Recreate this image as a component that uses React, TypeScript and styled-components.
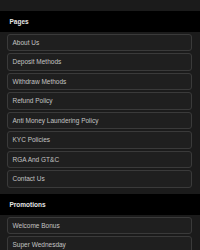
import React from 'react';
import styled, { createGlobalStyle } from 'styled-components';

const GlobalStyle = createGlobalStyle`
  html, body {
    margin: 0;
    padding: 0;
    background: #1b1b1b;
  }
  body {
    font-family: "Liberation Sans", Arial, sans-serif;
  }
`;

const Page = styled.div`
  padding-top: 11px;
  display: flex;
  flex-direction: column;
  gap: 6.5px;
`;

const Section = styled.section`
  display: flex;
  flex-direction: column;
`;

const Header = styled.div`
  background: #000;
  height: 21px;
  display: flex;
  align-items: center;
  padding-left: 9.5px;
  color: #e6e6e6;
  font-size: 6.5px;
  font-weight: bold;
`;

const List = styled.div`
  display: flex;
  flex-direction: column;
  gap: 2px;
  padding: 1.5px 8px 0 7px;
`;

const Item = styled.a`
  box-sizing: border-box;
  height: 17.5px;
  display: flex;
  align-items: center;
  padding-left: 4.5px;
  border: 1px solid #3a3a3a;
  border-radius: 3px;
  background: #1f1f1f;
  color: #c4c4c4;
  font-size: 6.5px;
  text-decoration: none;
  cursor: pointer;
`;

const pages = [
  'About Us',
  'Deposit Methods',
  'Withdraw Methods',
  'Refund Policy',
  'Anti Money Laundering Policy',
  'KYC Policies',
  'RGA And GT&C',
  'Contact Us',
];

const promotions = ['Welcome Bonus', 'Super Wednesday'];

export default function App() {
  return (
    <>
      <GlobalStyle />
      <Page>
        <Section>
          <Header>Pages</Header>
          <List>
            {pages.map((p) => (
              <Item key={p}>{p}</Item>
            ))}
          </List>
        </Section>
        <Section>
          <Header>Promotions</Header>
          <List>
            {promotions.map((p) => (
              <Item key={p}>{p}</Item>
            ))}
          </List>
        </Section>
      </Page>
    </>
  );
}
